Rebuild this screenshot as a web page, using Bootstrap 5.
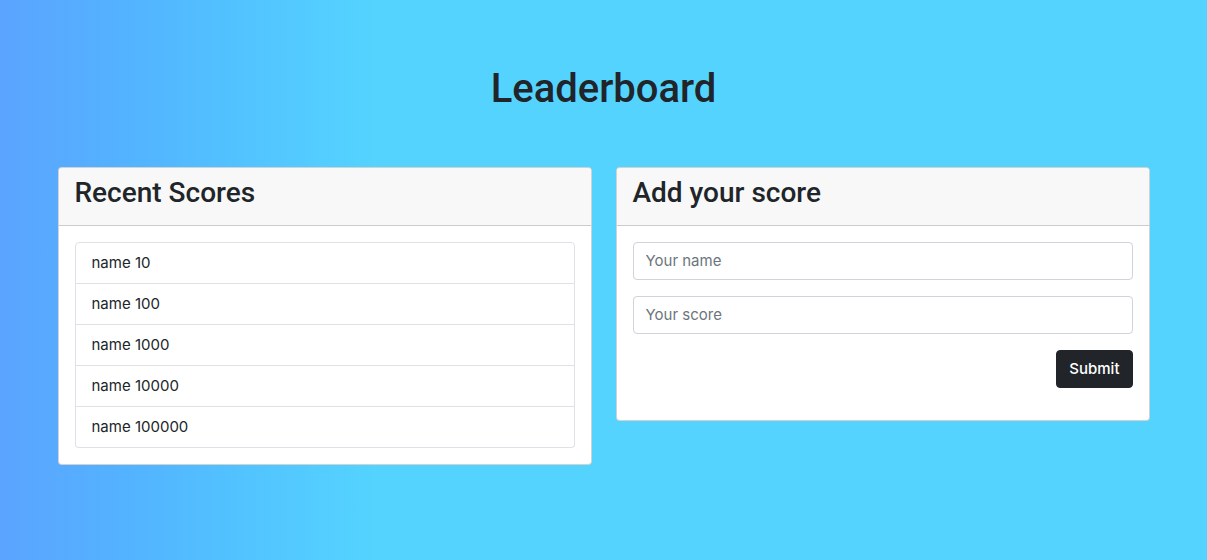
<!DOCTYPE html>
<html lang="en">
<head>
<meta charset="utf-8">
<meta name="viewport" content="width=device-width, initial-scale=1">
<title>Leaderboard</title>
<link href="https://cdn.jsdelivr.net/npm/bootstrap@5.3.0/dist/css/bootstrap.min.css" rel="stylesheet">
<style>
body {
  font-family: Inter, "Liberation Sans", sans-serif;
  font-size: 15px;
  line-height: 24px;
  background: linear-gradient(90deg, #5ba4ff 0%, #53b3ff 11%, #52c3ff 20%, #54d3ff 31%);
}
h1, h3 { font-family: Roboto, "Liberation Sans", sans-serif; }
h1 { line-height: 50px; margin: 48px 0 53px; }
.board { max-width: 1116px; }
.card, .list-group, .form-control, .btn { border-radius: 4px; }
.card-header h3 { line-height: 33px; }
.form-control, .btn { font-size: 15px; line-height: 24px; }
.form-control { border-color: #ced4da; }
.form-control::placeholder { color: #6c757d; }
.btn { font-weight: 500; }
</style>
</head>
<body class="min-vh-100">
<main class="container board py-3">
  <h1 class="text-center">Leaderboard</h1>
  <div class="row g-4">
    <section class="col-md-6">
      <div class="card">
        <div class="card-header"><h3>Recent Scores</h3></div>
        <div class="card-body">
          <ul class="list-group">
            <li class="list-group-item">name 10</li>
            <li class="list-group-item">name 100</li>
            <li class="list-group-item">name 1000</li>
            <li class="list-group-item">name 10000</li>
            <li class="list-group-item">name 100000</li>
          </ul>
        </div>
      </div>
    </section>
    <section class="col-md-6">
      <div class="card">
        <div class="card-header"><h3>Add your score</h3></div>
        <div class="card-body">
          <form>
            <input type="text" class="form-control mb-3" placeholder="Your name" aria-label="Your name">
            <input type="text" class="form-control mb-3" placeholder="Your score" aria-label="Your score">
            <div class="d-flex justify-content-end mb-3"><button type="submit" class="btn btn-dark">Submit</button></div>
          </form>
        </div>
      </div>
    </section>
  </div>
</main>
<script src="https://cdn.jsdelivr.net/npm/bootstrap@5.3.0/dist/js/bootstrap.bundle.min.js"></script>
</body>
</html>
